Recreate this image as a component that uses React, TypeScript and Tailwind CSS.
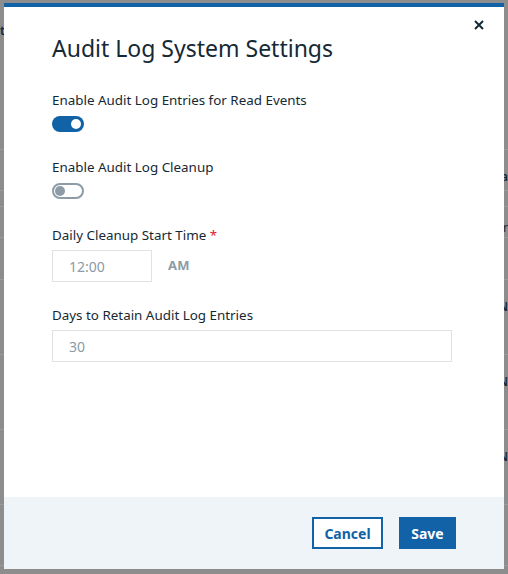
import React from "react";

const font = { fontFamily: '"Noto Sans", "Open Sans", sans-serif' };

function Toggle({ on }: { on: boolean }) {
  if (on) {
    return (
      <div className="flex h-4 w-8 items-center justify-end rounded-full bg-[#1162a6] px-[3px]">
        <div className="h-[10px] w-[10px] rounded-full bg-white" />
      </div>
    );
  }
  return (
    <div className="flex h-4 w-8 items-center rounded-full border-2 border-[#8c9ba5] bg-white px-[1px]">
      <div className="h-[10px] w-[10px] rounded-full bg-[#8c9ba5]" />
    </div>
  );
}

function Backdrop() {
  const rows = [150, 41, 16, 31, 42, 75, 75, 75, 61];
  return (
    <div className="flex h-full w-full flex-col bg-[#8d8d8d]">
      {rows.map((h, i) => (
        <div key={i} style={{ height: h }} className="flex shrink-0 justify-between border-b border-[#9a9a9a] text-[12px] font-semibold leading-[17px] text-[#1b2730]">
          <div className="pt-[22px]">{i === 0 ? "t" : ""}</div>
          <div className="flex flex-col pt-[18px]">
            {i === 1 ? <span>a</span> : null}
            {i === 3 ? <span className="-mt-[6px] font-normal">r</span> : null}
            {i >= 5 && i <= 7 ? (
              <>
                <span>N</span>
                <span>t</span>
              </>
            ) : null}
          </div>
        </div>
      ))}
    </div>
  );
}

export default function App() {
  return (
    <div className="relative h-[574px] w-[508px] overflow-hidden" style={font}>
      <Backdrop />
      <div className="absolute left-[4px] top-[3px] flex h-[566px] w-[500px] flex-col border-t-4 border-[#1162a6] bg-white">
        <div className="relative flex-1 px-12 pt-[25px] text-[#152935]">
          <button className="absolute right-[20px] top-[13px] text-[#152935]">
            <svg width="10" height="10" viewBox="0 0 10 10">
              <path d="M1 1 L9 9 M9 1 L1 9" stroke="#152935" strokeWidth="2" />
            </svg>
          </button>
          <h2 className="text-[23px] leading-[32px] text-[#152935]">Audit Log System Settings</h2>
          <div className="mt-[27px] text-[13.4px] leading-[18px]">Enable Audit Log Entries for Read Events</div>
          <div className="mt-[7px]"><Toggle on /></div>
          <div className="mt-[26px] text-[13.4px] leading-[18px]">Enable Audit Log Cleanup</div>
          <div className="mt-[7px]"><Toggle on={false} /></div>
          <div className="mt-[27px] text-[13.4px] leading-[18px]">
            Daily Cleanup Start Time <span className="text-[#e0182d]">*</span>
          </div>
          <div className="mt-[6px] flex items-center gap-4">
            <div className="flex h-8 w-[100px] items-center border border-[#dfe3e6] px-4 text-[14px] text-[#8c9ba5]">12:00</div>
            <span className="text-[13px] font-bold tracking-wide text-[#8c9ba5]">AM</span>
          </div>
          <div className="mt-[24px] text-[13.4px] leading-[18px]">Days to Retain Audit Log Entries</div>
          <div className="mt-[6px] flex h-8 w-[400px] items-center border border-[#dfe3e6] px-4 text-[14px] text-[#8c9ba5]">30</div>
        </div>
        <div className="flex h-[72px] items-center justify-end gap-4 bg-[#eff4f9] pr-[48px]">
          <button className="h-8 w-[71px] border-2 border-[#1162a6] bg-white text-[14px] font-bold text-[#1162a6]">Cancel</button>
          <button className="h-8 w-[57px] bg-[#1162a6] text-[14px] font-bold text-white">Save</button>
        </div>
      </div>
    </div>
  );
}
